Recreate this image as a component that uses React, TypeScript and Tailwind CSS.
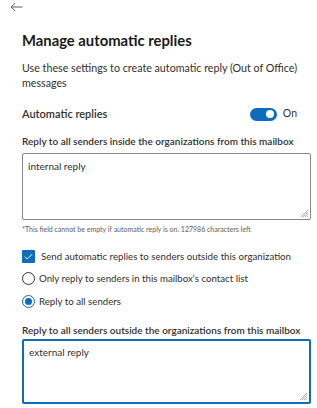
import React from "react";

function BackArrow() {
  return (
    <svg width="13" height="10" viewBox="0 0 13 10" fill="none" stroke="#605e5c" strokeWidth="1">
      <path d="M12.5 5H1.2M5.2 1L1.2 5l4 4" />
    </svg>
  );
}

function Toggle() {
  return (
    <div className="flex h-[13px] w-[27px] items-center justify-end rounded-full bg-[#0f6cbd] pr-[3px]">
      <div className="h-[8px] w-[8px] rounded-full bg-white" />
    </div>
  );
}

function Checkbox() {
  return (
    <div className="flex h-[13px] w-[13px] shrink-0 items-center justify-center rounded-[1px] bg-[#0f6cbd]">
      <svg width="9" height="7" viewBox="0 0 9 7" fill="none" stroke="white" strokeWidth="1">
        <path d="M0.8 3.6l2.4 2.4L8.2 1" />
      </svg>
    </div>
  );
}

function Radio({ checked }: { checked?: boolean }) {
  return (
    <div
      className={
        checked
          ? "flex h-[13px] w-[13px] shrink-0 items-center justify-center rounded-full border border-[#0f6cbd]"
          : "h-[13px] w-[13px] shrink-0 rounded-full border border-[#323130]"
      }
    >
      {checked && <div className="h-[7px] w-[7px] rounded-full bg-[#0f6cbd]" />}
    </div>
  );
}

function Grip() {
  return (
    <svg className="absolute bottom-[2px] right-[2px]" width="8" height="8" viewBox="0 0 8 8" stroke="#a19f9d" strokeWidth="0.8">
      <path d="M8 1L1 8M8 3L3 8M8 5L5 8M8 7L7 8" />
    </svg>
  );
}

export default function App() {
  return (
    <div className="h-[408px] w-[317px] overflow-hidden bg-white font-['Lato',sans-serif] text-[#323130]">
      <div className="flex pl-[10px] pt-[2px]">
        <BackArrow />
      </div>

      <div className="pl-[22px] pr-[6px]">
        <h1 className="mt-[18px] text-[14.8px] font-bold leading-[20px] text-[#1b1a19]">Manage automatic replies</h1>
        <p className="mt-[10px] text-[10.7px] leading-[15px]">
          Use these settings to create automatic reply (Out of Office) messages
        </p>

        <div className="mt-[17px] flex h-[14px] items-center justify-between pr-[14px]">
          <span className="text-[11px] font-semibold">Automatic replies</span>
          <div className="flex items-center gap-[6px]">
            <Toggle />
            <span className="text-[10.5px]">On</span>
          </div>
        </div>

        <p className="mt-[13px] whitespace-nowrap text-[10px] font-semibold leading-[14px]">
          Reply to all senders inside the organizations from this mailbox
        </p>
        <div className="relative mt-[5px] h-[67px] rounded-[2px] border border-[#8a8886] px-[5px] py-[5px] text-[10px] leading-[14px]">
          internal reply
          <Grip />
        </div>
        <p className="mt-[4px] whitespace-nowrap text-[7px] leading-[10px] text-[#605e5c]">
          *This field cannot be empty if automatic reply is on. 127986 characters left
        </p>

        <div className="mt-[15px] flex h-[14px] items-center gap-[6px] whitespace-nowrap text-[9.7px]">
          <Checkbox />
          <span>Send automatic replies to senders outside this organization</span>
        </div>
        <div className="mt-[8px] flex h-[14px] items-center gap-[4px] whitespace-nowrap text-[9.7px]">
          <Radio />
          <span>Only reply to senders in this mailbox's contact list</span>
        </div>
        <div className="mt-[9px] flex h-[14px] items-center gap-[4px] whitespace-nowrap text-[9.7px]">
          <Radio checked />
          <span>Reply to all senders</span>
        </div>

        <p className="mt-[15px] whitespace-nowrap text-[10px] font-semibold leading-[14px]">
          Reply to all senders outside the organizations from this mailbox
        </p>
        <div className="relative mt-[2px] h-[65px] rounded-[2px] border-2 border-[#0f6cbd] px-[5px] py-[4px] text-[10px] leading-[14px]">
          external reply
          <Grip />
        </div>
      </div>
    </div>
  );
}
